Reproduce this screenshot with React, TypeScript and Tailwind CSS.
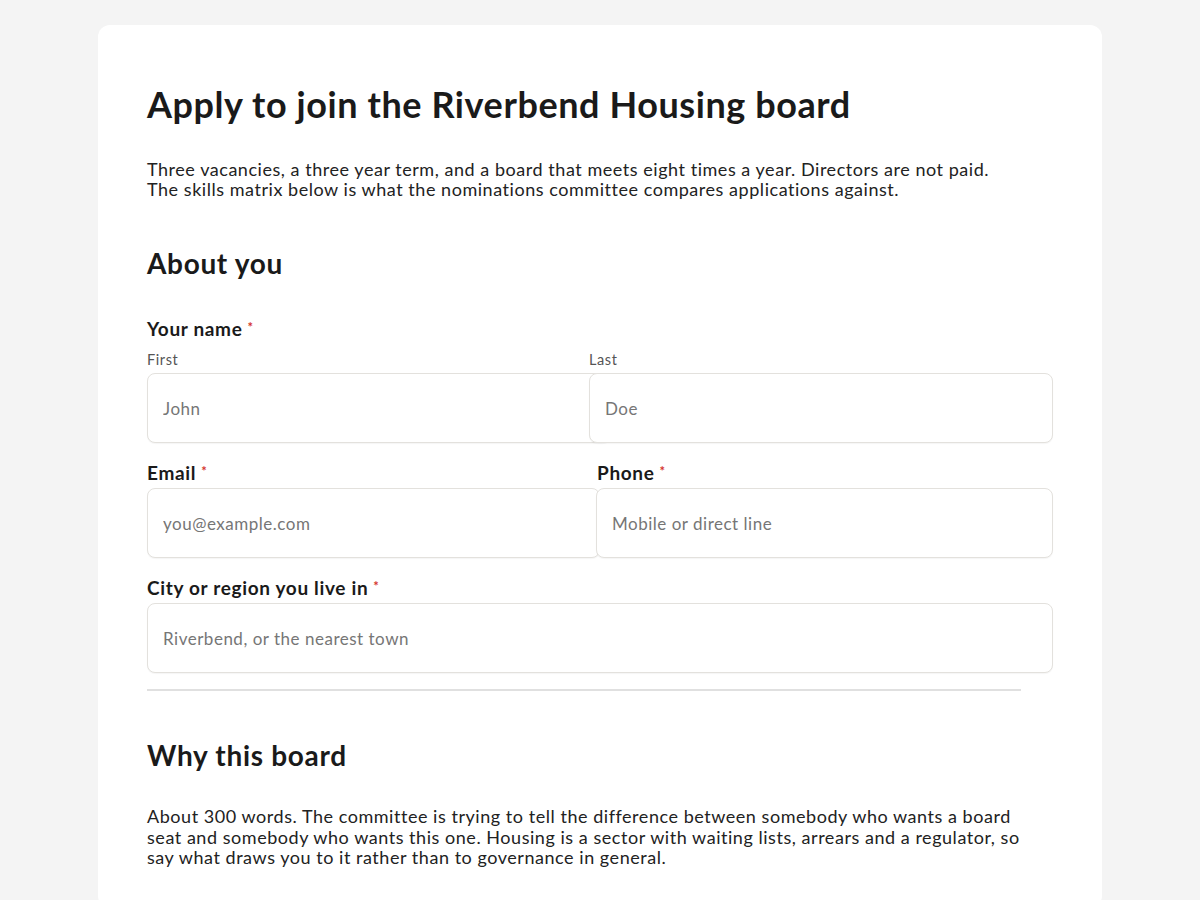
import React from 'react'

function Req() {
  return <span className="relative top-[-4px] ml-[5px] text-[13px] leading-none text-[#d4342c]">*</span>
}

interface FieldProps {
  placeholder: string
  className?: string
}

function TextInput({ placeholder, className = 'w-full' }: FieldProps) {
  return (
    <input
      type="text"
      placeholder={placeholder}
      className={`${className} relative block h-[70px] rounded-lg border border-[#e3e1dd] bg-white px-[15px] text-[17px] tracking-[0.03em] text-[#1a1a1a] placeholder:text-[#767676] shadow-[0_1px_1px_rgba(0,0,0,0.04)] outline-none`}
    />
  )
}

function Label({ children }: { children: React.ReactNode }) {
  return <div className="text-[19px] font-bold leading-[24px] tracking-[0.035em]">{children}</div>
}

export default function App() {
  return (
    <div className="min-h-screen bg-[#f4f4f4] pt-[25px] font-['Lato',sans-serif] text-[#1a1a1a]">
      <div className="mx-auto w-[1004px] rounded-xl bg-white px-[49px] pt-[59px] pb-10">
        <h1 className="text-[36px] font-bold leading-[40px] tracking-[0.016em]">
          Apply to join the Riverbend Housing board
        </h1>
        <p className="mt-[35px] max-w-[874px] text-[18px] leading-[20px] tracking-[0.03em] text-[#222]">
          Three vacancies, a three year term, and a board that meets eight times a year. Directors are not paid.
          The skills matrix below is what the nominations committee compares applications against.
        </p>

        <h2 className="mt-[47px] text-[28px] font-bold leading-[34px] tracking-[0.024em]">About you</h2>

        <div className="mt-[37px]">
          <Label>
            Your name
            <Req />
          </Label>
        </div>
        <div className="grid grid-cols-[442px_464px]">
          <div>
            <div className="mt-[10px] text-[14.5px] leading-[18px] tracking-[0.04em] text-[#555]">First</div>
            <div className="mt-[4px]">
              <TextInput placeholder="John" className="w-[464px]" />
            </div>
          </div>
          <div>
            <div className="mt-[10px] text-[14.5px] leading-[18px] tracking-[0.04em] text-[#555]">Last</div>
            <div className="mt-[4px]">
              <TextInput placeholder="Doe" />
            </div>
          </div>
        </div>

        <div className="mt-[18px] grid grid-cols-[449px_457px]">
          <div>
            <Label>
              Email
              <Req />
            </Label>
            <div className="mt-[3px]">
              <TextInput placeholder="you@example.com" className="w-[453px]" />
            </div>
          </div>
          <div>
            <div className="pl-px">
              <Label>
                Phone
                <Req />
              </Label>
            </div>
            <div className="mt-[3px]">
              <TextInput placeholder="Mobile or direct line" />
            </div>
          </div>
        </div>

        <div className="mt-[18px]">
          <Label>
            City or region you live in
            <Req />
          </Label>
        </div>
        <div className="mt-[3px]">
          <TextInput placeholder="Riverbend, or the nearest town" />
        </div>

        <div className="mt-[16px] max-w-[874px] border-t-2 border-[#e0e0e0]" />

        <h2 className="mt-[47px] text-[28px] font-bold leading-[34px] tracking-[0.025em]">Why this board</h2>
        <p className="mt-[34px] max-w-[874px] text-[18px] leading-[20.5px] tracking-[0.03em] text-[#222]">
          About 300 words. The committee is trying to tell the difference between somebody who wants a board
          seat and somebody who wants this one. Housing is a sector with waiting lists, arrears and a regulator, so
          say what draws you to it rather than to governance in general.
        </p>
      </div>
    </div>
  )
}
